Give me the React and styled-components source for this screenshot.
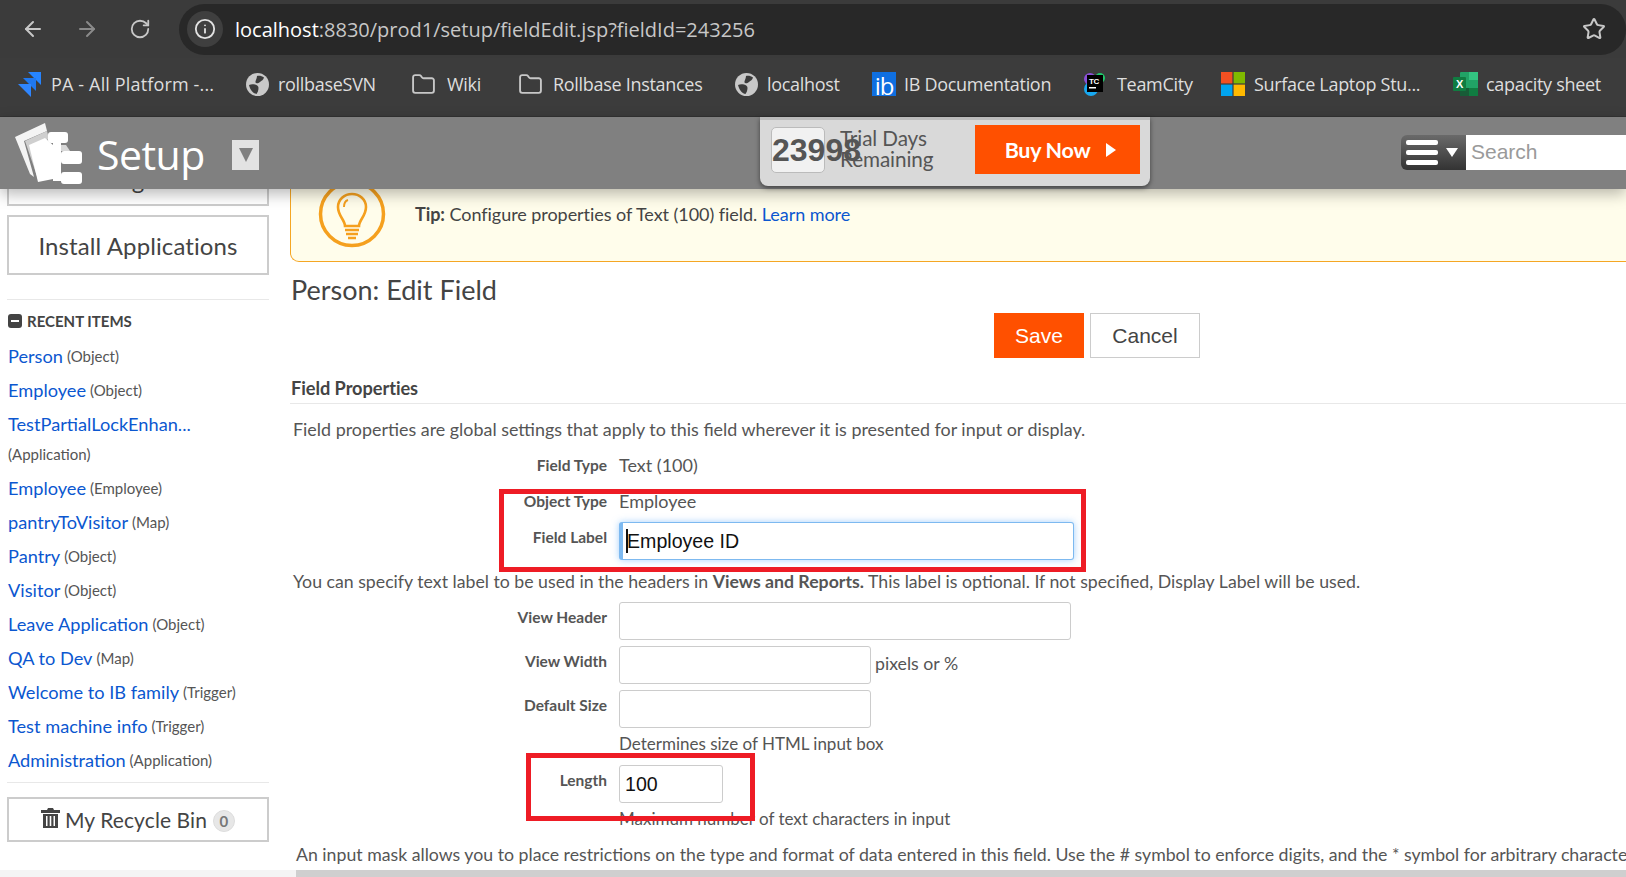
import React from "react";
import styled, { createGlobalStyle } from "styled-components";
import { ArrowLeft, ArrowRight, RotateCw, Info, Star, Folder } from "lucide-react";

const Global = createGlobalStyle`
  html, body { margin: 0; padding: 0; height: 100%; overflow: hidden; background: #fff; }
  * { box-sizing: border-box; }
  body { font-family: Lato, "Open Sans", sans-serif; color: #555; }
`;

const Page = styled.div`position: relative; width: 1626px; height: 877px; overflow: hidden; display: flex; flex-direction: column;`;

const Toolbar = styled.div`height: 58px; background: #3b3b3b; display: flex; align-items: center; padding: 0 0 0 21px; flex: none;`;
const NavButton = styled.span`display: flex; width: 24px; color: ${p => p.$dim ? "#8a8a8a" : "#c7c7c7"}; margin-right: ${p => p.$gap || 0}px;`;
const UrlPill = styled.div`flex: 1; height: 51px; background: #282828; border-radius: 26px; display: flex; align-items: center; padding: 0 20px 0 8px;`;
const InfoDot = styled.span`width: 36px; height: 36px; border-radius: 50%; background: #3f3f3f; color: #e3e3e3; display: flex; align-items: center; justify-content: center; margin-right: 12px;`;
const Url = styled.div`flex: 1; font: 400 20px "Open Sans", sans-serif; letter-spacing: 0; color: #c7c7c7; b { font-weight: 400; color: #fff; }`;
const BookmarkBar = styled.div`height: 59px; background: #3c3c3c; display: flex; align-items: center; padding: 0 0 6px 17px; flex: none; border-bottom: 1px solid #333;`;
const Bookmark = styled.div`display: flex; align-items: center; gap: ${p => p.$gap || 9}px; width: ${p => p.$w}px; flex: none; font: 400 18px "Open Sans", sans-serif; letter-spacing: ${p => p.$ls ?? -0.3}px; color: #dedede; white-space: nowrap;`;
const IbIcon = styled.span`width: 24px; height: 24px; background: #0f6fe0; color: #fff; font: 400 24px/24px "Open Sans", sans-serif; display: block; text-align: center; overflow: hidden; letter-spacing: -1px; padding-top: 2px;`;

const SetupBar = styled.div`height: 72px; background: #808080; display: flex; align-items: center; position: relative; z-index: 3; box-shadow: 0 5px 14px rgba(0,0,0,.28); flex: none; padding-left: 15px;`;
const Brand = styled.div`font: 400 41px/1 "Open Sans", Lato, sans-serif; letter-spacing: -.5px; color: #fff; margin-left: 14px; width: 135px; padding-top: 2px;`;
const AppDrop = styled.div`width: 27px; height: 30px; background: #e2e2e2; display: flex; align-items: center; justify-content: center; margin-top: 3px;`;
const Arrow = styled.span`width: 0; height: 0; border-left: 7.5px solid transparent; border-right: 7.5px solid transparent; border-top: 14px solid #808080;`;
const TrialBox = styled.div`width: 390px; height: 69px; margin: -3px 0 0 501px; background: #d9d9d9; border-radius: 0 0 8px 8px; box-shadow: 0 2px 5px rgba(0,0,0,.5); display: flex; align-items: flex-start; padding: 5px 10px 0 11px; border-top: 3px solid #bbb;`;
const Counter = styled.div`width: 54px; height: 46px; background: #f1f1f1; border: 1px solid #bbb; border-radius: 5px; font: 700 32px/44px "Liberation Sans", sans-serif; color: #555; padding-left: 0; flex: none; white-space: nowrap; margin-top: 2px;`;
const TrialText = styled.div`font: 400 20.7px/21px Lato, sans-serif; color: #555; width: 135px; margin: 3px 0 0 15px; letter-spacing: -.1px;`;
const BuyNow = styled.div`width: 165px; height: 49px; background: #ff5000; color: #fff; font: 700 21.5px Lato, sans-serif; display: flex; align-items: center; justify-content: center; gap: 16px; letter-spacing: -.3px; padding-left: 6px;`;
const RightArrow = styled.span`width: 0; height: 0; border-top: 7px solid transparent; border-bottom: 7px solid transparent; border-left: 10px solid #fff;`;
const MenuButton = styled.div`width: 65px; height: 35px; margin-left: 251px; background: linear-gradient(#6a6a6a, #333); border-radius: 6px 0 0 6px; display: flex; align-items: center; padding-left: 5px; gap: 8px; margin-top: -2px;`;
const Bars = styled.div`display: flex; flex-direction: column; gap: 5px; span { display: block; width: 32px; height: 5px; border-radius: 2px; background: #fff; }`;
const DownArrow = styled.span`width: 0; height: 0; border-left: 6px solid transparent; border-right: 6px solid transparent; border-top: 9px solid #fff;`;
const Search = styled.div`flex: 1; height: 35px; background: #fff; font: 400 21px/33px "Liberation Sans", sans-serif; color: #9a9a9a; padding-left: 5px; margin-top: -2px;`;

const Body = styled.div`flex: 1; display: flex; min-height: 0; overflow: hidden;`;
const Sidebar = styled.aside`width: 290px; flex: none; padding: 0 21px 0 7px;`;
const ClippedBox = styled.div`height: 17px; border: 2px solid #ccc; border-top: 0; margin-bottom: 9px; overflow: hidden; text-align: center; font: 400 24px/24px Lato, sans-serif; color: #444;`;
const ClippedText = styled.div`margin-top: -21px;`;
const SideButton = styled.div`height: ${p => p.$h}px; border: 2px solid #ccc; display: flex; align-items: center; justify-content: center; gap: 5px; font: 400 ${p => p.$size || 24}px Lato, sans-serif; color: #444; letter-spacing: .1px;`;
const Rule = styled.div`height: 1px; background: #e8e8e8; margin: ${p => p.$m};`;
const RecentHead = styled.div`display: flex; align-items: center; gap: 5px; height: 14px; margin: 14px 0 11px 1px; font: 700 15px Lato, sans-serif; color: #444; letter-spacing: 0;`;
const MinusIcon = styled.span`width: 14px; height: 14px; border-radius: 3px; background: #444; display: flex; align-items: center; justify-content: center; &::after { content: ""; width: 8px; height: 2px; background: #fff; }`;
const Item = styled.div`min-height: ${p => p.$h || 34}px; display: flex; align-items: center; padding-left: 1px; flex-wrap: wrap; gap: 0 4px; a { color: #0b57d0; font-size: 18.2px; } span { font-size: 15px; color: #555; }`;
const WrapNote = styled.div`height: 31px; padding-left: 1px; font-size: 15px; line-height: 28px; color: #555;`;
const Badge = styled.span`width: 22px; height: 22px; border-radius: 50%; background: #e7e7e7; border: 1px solid #ddd; font: 700 15px/20px Lato, sans-serif; color: #777; text-align: center; margin: 3px 0 0 1px;`;

const Main = styled.main`flex: 1; min-width: 0; font-size: 18px; color: #555;`;
const Tip = styled.div`height: 73px; background: #fffdeb; border: 1px solid #f5a623; border-top: 0; border-right: 0; border-radius: 0 0 0 9px; display: flex; overflow: hidden; padding-left: 27px; white-space: nowrap; color: #444;`;
const TipText = styled.div`margin: 13px 0 0 29px; line-height: 24px; letter-spacing: -.05px; b { font-weight: 700; } a { color: #0b57d0; }`;
const Heading = styled.h1`font: 400 27px/32px Lato, sans-serif; color: #444; margin: 12px 0 0 1px;`;
const Actions = styled.div`display: flex; gap: 6px; padding-left: 704px; margin-top: 7px;`;
const SaveBtn = styled.div`width: 90px; height: 45px; background: #ff5000; color: #fff; font: 400 21px/45px "Liberation Sans", sans-serif; text-align: center;`;
const CancelBtn = styled.div`width: 110px; height: 45px; border: 1px solid #ccc; color: #444; font: 400 21px/43px "Liberation Sans", sans-serif; text-align: center;`;
const SectionTitle = styled.h2`font: 700 18.2px/24px Lato, sans-serif; color: #444; margin: 18px 0 0 1px; padding: 0; letter-spacing: -.05px;`;
const SectionRule = styled.div`height: 1px; background: #e8e8e8; margin-top: 3px;`;
const Para = styled.p`margin: ${p => p.$top}px 0 0 ${p => p.$left || 3}px; font-size: ${p => p.$size || 17.9}px; line-height: 24px; white-space: nowrap; b { font-weight: 700; }`;
const Row = styled.div`display: flex; align-items: flex-start; height: ${p => p.$h}px; margin-top: ${p => p.$top || 0}px;`;
const Label = styled.div`width: 330px; flex: none; text-align: right; padding: ${p => p.$pad || 0}px 13px 0 0; font: 700 15.5px/24px Lato, sans-serif; color: #555;`;
const Value = styled.div`line-height: 24px; white-space: nowrap; margin-left: -1px;`;
const TextInput = styled.div`width: ${p => p.$w}px; height: 38px; margin-top: ${p => p.$focus ? -3 : 0}px; margin-left: -1px; border: 1px solid ${p => p.$focus ? "#7db9f0" : "#ccc"}; border-left: ${p => p.$focus ? "4px solid #7db9f0" : "1px solid #ccc"}; border-radius: 3px; background: #fff; font: 400 19.6px/36px "Liberation Sans", sans-serif; color: #111; padding-left: ${p => p.$focus ? 3 : 5}px; box-shadow: ${p => p.$focus ? "0 0 7px rgba(90,170,250,.55)" : "none"}; flex: none;`;
const Caret = styled.span`display: inline-block; width: 2px; height: 24px; background: #111; vertical-align: -5px; margin-right: -1px;`;
const Suffix = styled.span`line-height: 36px; margin-left: 4px; white-space: nowrap; font-size: 17.7px;`;
const Hint = styled.div`padding-left: 329px; font-size: 17px; line-height: 24px; margin-top: ${p => p.$top || 0}px; white-space: nowrap;`;
const Highlight = styled.div`position: absolute; left: ${p => p.$x}px; top: ${p => p.$y}px; width: ${p => p.$w}px; height: ${p => p.$h}px; border: 5px solid #ee1c25; z-index: 2; pointer-events: none;`;
const ScrollBar = styled.div`position: absolute; left: 0; right: 0; bottom: 0; height: 7px; background: linear-gradient(90deg, #f4f4f4 0 296px, #cfcfcf 296px); z-index: 2;`;

const PaIcon = () => (
  <svg width="25" height="25" viewBox="0 0 25 25">
    <path fill="#2684ff" d="M11 0h13v13l-6-6z" />
    <path fill="#1f78f0" d="M6 6h13v13l-6-6z" />
    <path fill="#2f86ff" d="M1 12h13v13l-6-6z" />
  </svg>
);
const WebGlobe = () => (
  <svg width="23" height="23" viewBox="0 0 23 23">
    <circle cx="11.500" cy="11.500" r="11.500" fill="#c9c9c9" />
    <path fill="#3c3c3c" d="M11 3c3-.5 5 .2 7 1.500-.5 2.500-2.500 3-4 4.500-1.500 1.300-4 1.800-4.500.5C9 8 11 6 11 3z" />
    <path fill="#3c3c3c" d="M3 12c2-1 4-1 6-.5 2 .5 3.500 1.500 3.500 3.500 0 2.500-1 4.500-2 6-3-.5-6-3-7.500-9z" />
  </svg>
);
const TcIcon = () => (
  <svg width="22" height="24" viewBox="0 0 22 24"><circle cx="6" cy="7" r="6" fill="#8b4fd8"/><circle cx="16" cy="6" r="5" fill="#1fc86a"/><circle cx="7" cy="17" r="7" fill="#18a8f0"/><rect x="3" y="3" width="16" height="17" fill="#000"/><text x="5" y="12" fontSize="8" fontWeight="700" fill="#fff" fontFamily="Liberation Sans">TC</text><rect x="5" y="15" width="7" height="1.5" fill="#fff"/></svg>
);
const MsIcon = () => (
  <svg width="24" height="24" viewBox="0 0 24 24"><rect width="11.4" height="11.4" fill="#f25022"/><rect x="12.6" width="11.4" height="11.4" fill="#7fba00"/><rect y="12.6" width="11.4" height="11.4" fill="#00a4ef"/><rect x="12.6" y="12.6" width="11.4" height="11.4" fill="#ffb900"/></svg>
);
const XlIcon = () => (
  <svg width="25" height="24" viewBox="0 0 25 24"><rect x="7" y="0" width="18" height="24" rx="1" fill="#21a366"/><rect x="16" y="0" width="9" height="8" fill="#33c481"/><rect x="16" y="16" width="9" height="8" fill="#107c41"/><rect x="7" y="16" width="9" height="8" fill="#185c37"/><rect x="0" y="5" width="13" height="14" rx="1" fill="#107c41"/><text x="3" y="16" fontSize="11" fontWeight="700" fill="#fff" fontFamily="Liberation Sans">X</text></svg>
);
const Logo = () => (
  <svg width="68" height="64" viewBox="0 0 68 64" style={{ flex: "none", marginTop: 1 }}>
    <path fill="#f4f4f4" d="M0 15 30 1l2 8L9 19l10 36-4-3z" />
    <path fill="#cfcfcf" d="M10 19 32 9l2 8-17 7 9 32-4-2z" />
    <path fill="#fff" d="M14 23 30 16l8 7v34l-15 3z" />
    <rect x="33" y="10" width="20" height="11" rx="3" fill="#fff" />
    <rect x="38" y="21" width="8" height="38" fill="#fff" />
    <path fill="#d8d8d8" d="M46 23h5l4 6h-9z" />
    <rect x="46" y="29" width="21" height="13" rx="3" fill="#fff" />
    <rect x="46" y="50" width="21" height="12" rx="3" fill="#fff" />
    <rect x="38" y="53" width="10" height="3" fill="#fff" />
    <rect x="38" y="34" width="10" height="3" fill="#fff" />
  </svg>
);
const Bulb = () => (
  <svg width="68" height="68" viewBox="0 0 68 68" style={{ marginTop: -9, flex: "none" }}>
    <circle cx="34" cy="34" r="31.500" fill="none" stroke="#f5a01e" strokeWidth="3.500"/>
    <path fill="none" stroke="#f5a01e" strokeWidth="2.600" d="M27 46c0-6-7-10-7-19a14 13 0 0 1 28 0c0 9-7 13-7 19z"/>
    <path fill="none" stroke="#f5a01e" strokeWidth="2" d="M30 20c-3 1-4 4-4 7"/>
    <path stroke="#f5a01e" strokeWidth="2.600" d="M27 50h14M28 54h12M30 58h8"/>
  </svg>
);
const Trash = () => (
  <svg width="19" height="20" viewBox="0 0 19 20" style={{ marginTop: -4 }}>
    <path fill="#444" d="M7 0h5l1 2h6v3H0V2h6zM2 6h15v14H2zM5 8v10h1.500V8zm3.700 0v10h1.600V8zm3.800 0v10H14V8z"/>
  </svg>
);

const recents = [
  ["Person", "(Object)"], ["Employee", "(Object)"], ["TestPartialLockEnhan...", null, "(Application)"],
  ["Employee", "(Employee)"], ["pantryToVisitor", "(Map)"], ["Pantry", "(Object)"], ["Visitor", "(Object)"],
  ["Leave Application", "(Object)"], ["QA to Dev", "(Map)"], ["Welcome to IB family", "(Trigger)"],
  ["Test machine info", "(Trigger)"], ["Administration", "(Application)"],
];

export default function App() {
  return (
    <Page>
      <Global />
      <Toolbar>
        <NavButton $gap={30}><ArrowLeft size={24} strokeWidth={2} /></NavButton>
        <NavButton $dim $gap={30}><ArrowRight size={24} strokeWidth={2} /></NavButton>
        <NavButton $gap={26}><RotateCw size={22} strokeWidth={2} /></NavButton>
        <UrlPill>
          <InfoDot><Info size={22} strokeWidth={2} /></InfoDot>
          <Url><b>localhost</b>:8830/prod1/setup/fieldEdit.jsp?fieldId=243256</Url>
          <Star size={24} color="#c7c7c7" strokeWidth={2} />
        </UrlPill>
      </Toolbar>
      <BookmarkBar>
        <Bookmark $w={229} $ls={0.15}><PaIcon />PA - All Platform -...</Bookmark>
        <Bookmark $w={165}><WebGlobe />rollbaseSVN</Bookmark>
        <Bookmark $w={107} $gap={11}><Folder size={25} color="#c7c7c7" strokeWidth={1.8} />Wiki</Bookmark>
        <Bookmark $w={217} $gap={10}><Folder size={25} color="#c7c7c7" strokeWidth={1.8} />Rollbase Instances</Bookmark>
        <Bookmark $w={137}><WebGlobe />localhost</Bookmark>
        <Bookmark $w={212} $gap={8}><IbIcon>ib</IbIcon>IB Documentation</Bookmark>
        <Bookmark $w={137} $gap={11}><TcIcon />TeamCity</Bookmark>
        <Bookmark $w={232} $gap={9}><MsIcon />Surface Laptop Stu...</Bookmark>
        <Bookmark $w={170} $gap={8}><XlIcon />capacity sheet</Bookmark>
      </BookmarkBar>
      <SetupBar>
        <Logo />
        <Brand>Setup</Brand>
        <AppDrop><Arrow /></AppDrop>
        <TrialBox>
          <Counter>23998</Counter>
          <TrialText>Trial Days Remaining</TrialText>
          <BuyNow>Buy Now<RightArrow /></BuyNow>
        </TrialBox>
        <MenuButton>
          <Bars><span /><span /><span /></Bars>
          <DownArrow />
        </MenuButton>
        <Search>Search</Search>
      </SetupBar>
      <Body>
        <Sidebar>
          <ClippedBox><ClippedText>g</ClippedText></ClippedBox>
          <SideButton $h={60}>Install Applications</SideButton>
          <Rule $m="24px 0 0" />
          <RecentHead><MinusIcon />RECENT ITEMS</RecentHead>
          {recents.map(([name, type, note], i) => (
            <React.Fragment key={i}>
              <Item $h={note ? 33 : 34}><a>{name}</a>{type && <span>{type}</span>}</Item>
              {note && <WrapNote>{note}</WrapNote>}
            </React.Fragment>
          ))}
          <Rule $m="5px 0 14px" />
          <SideButton $h={45} $size={21}><Trash />My Recycle Bin<Badge>0</Badge></SideButton>
        </Sidebar>
        <Main>
          <Tip>
            <Bulb />
            <TipText><b>Tip:</b> Configure properties of Text (100) field. <a>Learn more</a></TipText>
          </Tip>
          <Heading>Person: Edit Field</Heading>
          <Actions><SaveBtn>Save</SaveBtn><CancelBtn>Cancel</CancelBtn></Actions>
          <SectionTitle>Field Properties</SectionTitle>
          <SectionRule />
          <Para $top={13}>Field properties are global settings that apply to this field wherever it is presented for input or display.</Para>
          <Row $h={36} $top={12}><Label>Field Type</Label><Value>Text (100)</Value></Row>
          <Row $h={36}><Label>Object Type</Label><Value>Employee</Value></Row>
          <Row $h={42}><Label>Field Label</Label><TextInput $w={455} $focus><Caret />Employee ID</TextInput></Row>
          <Para $top={3} $size={17.72}>You can specify text label to be used in the headers in <b>Views and Reports.</b> This label is optional. If not specified, Display Label will be used.</Para>
          <Row $h={44} $top={8}><Label $pad={3}>View Header</Label><TextInput $w={452} /></Row>
          <Row $h={44}><Label $pad={3}>View Width</Label><TextInput $w={252} /><Suffix>pixels or %</Suffix></Row>
          <Row $h={38}><Label $pad={3}>Default Size</Label><TextInput $w={252} /></Row>
          <Hint $top={4}>Determines size of HTML input box</Hint>
          <Row $h={38} $top={9}><Label $pad={3}>Length</Label><TextInput $w={104}>100</TextInput></Row>
          <Hint $top={4}>Maximum number of text characters in input</Hint>
          <Para $top={12} $left={6} $size={17.7}>An input mask allows you to place restrictions on the type and format of data entered in this field. Use the # symbol to enforce digits, and the * symbol for arbitrary characters.</Para>
        </Main>
      </Body>
      <Highlight $x={499} $y={489} $w={587} $h={83} />
      <Highlight $x={526} $y={753} $w={229} $h={68} />
      <ScrollBar />
    </Page>
  );
}
